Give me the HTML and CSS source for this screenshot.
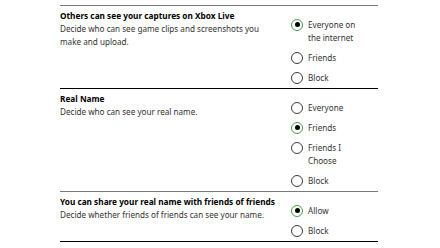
FILE: index.html
```html
<!DOCTYPE html>
<html>
<head>
<meta charset="utf-8">
<link rel="stylesheet" href="styles.css">
</head>
<body>
<div class="list">
  <section class="row row--gray">
    <div class="info">
      <h3 class="title">Others can see your captures on Xbox Live</h3>
      <p class="desc">Decide who can see game clips and screenshots you make and upload.</p>
    </div>
    <div class="options">
      <div class="opt is-checked"><span class="radio"></span><span class="lbl">Everyone on the internet</span></div>
      <div class="opt"><span class="radio"></span><span class="lbl">Friends</span></div>
      <div class="opt"><span class="radio"></span><span class="lbl">Block</span></div>
    </div>
  </section>
  <section class="row row--dark">
    <div class="info">
      <h3 class="title">Real Name</h3>
      <p class="desc">Decide who can see your real name.</p>
    </div>
    <div class="options">
      <div class="opt"><span class="radio"></span><span class="lbl">Everyone</span></div>
      <div class="opt is-checked"><span class="radio"></span><span class="lbl">Friends</span></div>
      <div class="opt"><span class="radio"></span><span class="lbl">Friends I Choose</span></div>
      <div class="opt"><span class="radio"></span><span class="lbl">Block</span></div>
    </div>
  </section>
  <section class="row row--gray row--last">
    <div class="info">
      <h3 class="title">You can share your real name with friends of friends</h3>
      <p class="desc">Decide whether friends of friends can see your name.</p>
    </div>
    <div class="options">
      <div class="opt is-checked"><span class="radio"></span><span class="lbl">Allow</span></div>
      <div class="opt"><span class="radio"></span><span class="lbl">Block</span></div>
    </div>
  </section>
</div>
</body>
</html>
```

FILE: styles.css
```css
html, body {
  margin: 0;
  padding: 0;
  background: #ffffff;
}
body {
  font-family: "Noto Sans", "Open Sans", sans-serif;
  color: #222;
}
.list {
  width: 318px;
  margin-left: 60px;
  padding-top: 5px;
}
.row {
  display: grid;
  grid-template-columns: 231px 87px;
  border-top: 1px solid #7a7a7a;
  padding-bottom: 4px;
}
.row--dark {
  border-top-color: #000;
}
.row--last {
  border-bottom: 1px solid #000;
}
.info {
  padding-top: 4px;
}
.title {
  margin: 0;
  font-size: 8.25px;
  font-weight: 700;
  line-height: 12px;
  color: #000;
}
.desc {
  margin: 0;
  font-size: 8.15px;
  line-height: 13px;
  color: #333;
  width: 212px;
}
.options {
  padding-top: 12px;
  display: flex;
  flex-direction: column;
  gap: 7px;
}
.opt {
  display: flex;
  align-items: flex-start;
  font-size: 8.15px;
  line-height: 13px;
  color: #333;
}
.radio {
  flex: none;
  box-sizing: border-box;
  width: 12px;
  height: 12px;
  margin-top: 0.5px;
  margin-right: 5px;
  border: 1px solid #3a3a3a;
  border-radius: 50%;
  position: relative;
}
.is-checked .radio {
  border-color: #3f9f45;
}
.is-checked .radio::after {
  content: "";
  position: absolute;
  left: 2.5px;
  top: 2.5px;
  width: 5px;
  height: 5px;
  border-radius: 50%;
  background: #000;
}
.lbl {
  width: 52px;
}
```
